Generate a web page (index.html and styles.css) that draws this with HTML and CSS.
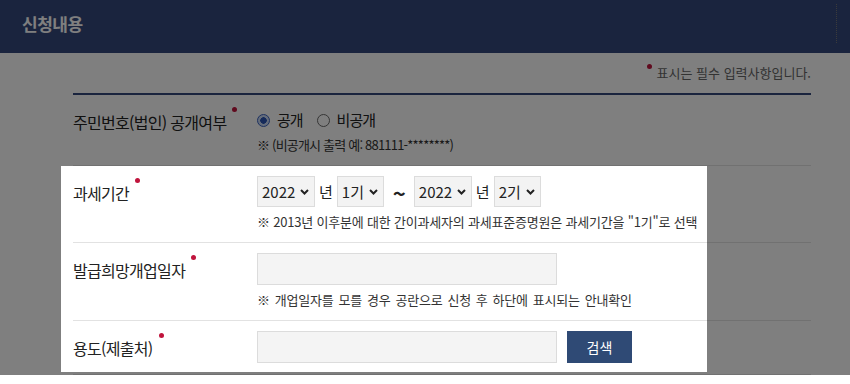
FILE: index.html
```html
<!DOCTYPE html>
<html lang="ko">
  <head>
    <meta charset="UTF-8" />
    <meta name="viewport" content="width=device-width, initial-scale=1.0" />
    <title>신청내용</title>
    <link rel="stylesheet" href="styles.css">
  </head>
  <body>
    <header class="page-head">
      <h1>신청내용</h1>
      <span class="head-edge"></span>
    </header>

    <main class="content">
      <p class="req-note"><i class="req"></i>표시는 필수 입력사항입니다.</p>

      <div class="form-table">
        <div class="row">
          <div class="label">주민번호(법인) 공개여부<i class="req"></i></div>
          <div class="field">
            <div class="radios">
              <label><input type="radio" name="open" checked />공개</label>
              <label><input type="radio" name="open" />비공개</label>
            </div>
            <p class="hint">※ (비공개시 출력 예: 881111-********)</p>
          </div>
        </div>

        <div class="focus-group">
          <div class="row">
            <div class="label">과세기간<i class="req"></i></div>
            <div class="field">
              <div class="period">
                <span class="sel">
                  <select name="fromYear">
                    <option>2022</option>
                    <option>2021</option>
                    <option>2020</option>
                  </select>
                  <svg width="9" height="6" viewBox="0 0 9 6"><path d="M1 1l3.5 3.5L8 1" fill="none" stroke="#222" stroke-width="2" /></svg>
                </span>
                <span>년</span>
                <span class="sel">
                  <select name="fromTerm">
                    <option>1기</option>
                    <option>2기</option>
                  </select>
                  <svg width="9" height="6" viewBox="0 0 9 6"><path d="M1 1l3.5 3.5L8 1" fill="none" stroke="#222" stroke-width="2" /></svg>
                </span>
                <span class="tilde">~</span>
                <span class="sel">
                  <select name="toYear">
                    <option>2022</option>
                    <option>2021</option>
                    <option>2020</option>
                  </select>
                  <svg width="9" height="6" viewBox="0 0 9 6"><path d="M1 1l3.5 3.5L8 1" fill="none" stroke="#222" stroke-width="2" /></svg>
                </span>
                <span>년</span>
                <span class="sel">
                  <select name="toTerm">
                    <option>2기</option>
                    <option>1기</option>
                  </select>
                  <svg width="9" height="6" viewBox="0 0 9 6"><path d="M1 1l3.5 3.5L8 1" fill="none" stroke="#222" stroke-width="2" /></svg>
                </span>
              </div>
              <p class="hint">※ 2013년 이후분에 대한 간이과세자의 과세표준증명원은 과세기간을 "1기"로 선택</p>
            </div>
          </div>

          <div class="row">
            <div class="label">발급희망개업일자<i class="req"></i></div>
            <div class="field">
              <input class="text-input" type="text" name="openDate" />
              <p class="hint wide">※ 개업일자를 모를 경우 공란으로 신청 후 하단에 표시되는 안내확인</p>
            </div>
          </div>

          <div class="row">
            <div class="label">용도(제출처)<i class="req"></i></div>
            <div class="field inline">
              <input class="text-input" type="text" name="usage" />
              <button type="button" class="btn-search">검색</button>
            </div>
          </div>

          <!-- dim everything except this block -->
          <div class="spotlight"></div>
        </div>
      </div>
    </main>
  </body>
</html>
```

FILE: styles.css
```css
* {
  box-sizing: border-box;
  font-family: "Noto Sans CJK KR", "Malgun Gothic", sans-serif;
}

html,
body {
  margin: 0;
  padding: 0;
  background: #fff;
  overflow: hidden;
}

.page-head {
  display: flex;
  align-items: center;
  height: 53px;
  padding: 0 13px 0 22px;
  background: #34497d;
}

.page-head h1 {
  margin: 0 0 7px;
  font-size: 17px;
  font-weight: bold;
  letter-spacing: -0.5px;
  color: #fff;
}

.head-edge {
  margin-left: auto;
  align-self: flex-start;
  margin-top: 4px;
  height: 39px;
  border-left: 1px dotted #777;
}

.content {
  padding: 0 39px 0 73px;
}

.req-note {
  margin: 10px 0 0;
  line-height: 20px;
  font-size: 13px;
  color: #666;
  text-align: right;
}

.req {
  display: inline-block;
  width: 5px;
  height: 5px;
  border-radius: 50%;
  background: #c0143c;
}

.req-note .req {
  margin-right: 5px;
  vertical-align: 9px;
}

.form-table {
  margin-top: 10px;
  border-top: 2px solid #34497d;
}

.focus-group {
  position: relative;
}

.row {
  display: grid;
  grid-template-columns: 184px 1fr;
  padding: 10px 0;
  border-bottom: 1px solid #e2e2e2;
}

.label {
  padding-top: 1px;
  line-height: 32px;
  font-size: 16px;
  letter-spacing: -0.7px;
  color: #222;
}

.label .req {
  margin-left: 6px;
  vertical-align: 17px;
}

.field.inline {
  display: flex;
  gap: 10px;
}

.radios {
  display: flex;
  gap: 14px;
  line-height: 30px;
  font-size: 15px;
  letter-spacing: -1px;
  color: #222;
}

.radios label {
  display: flex;
  align-items: center;
}

.radios input {
  appearance: none;
  width: 13px;
  height: 13px;
  margin: 0 7px 0 0;
  border: 1px solid #6b6b6b;
  border-radius: 50%;
  background: #fff;
}

.radios input:checked {
  border-color: #3a62c0;
  background: radial-gradient(circle, #2b55b5 0 3px, #c9d9f5 3.5px 100%);
}

.hint {
  margin: 5px 0 0;
  line-height: 20px;
  font-size: 13px;
  letter-spacing: -0.2px;
  color: #333;
}

.hint.wide {
  word-spacing: 1.5px;
}

.radios + .hint {
  margin-top: 0;
  letter-spacing: -0.8px;
}

.period {
  display: flex;
  align-items: center;
  gap: 4px;
  font-size: 15px;
  color: #222;
}

.sel {
  display: inline-flex;
  align-items: center;
  gap: 4px;
  height: 31px;
  padding: 0 5px 0 4px;
  border: 1px solid #dcdcdc;
  background: #f3f3f3;
}

.sel select {
  appearance: none;
  border: 0;
  padding: 0;
  background: transparent;
  font-size: 15px;
  color: #222;
}

.tilde {
  margin: 0 4px 0 5px;
  font-size: 22px;
  font-weight: bold;
  line-height: 1;
}

.text-input {
  width: 300px;
  height: 32px;
  border: 1px solid #dcdcdc;
  background: #f4f4f4;
  font-size: 14px;
}

.btn-search {
  width: 65px;
  height: 32px;
  border: 0;
  background: #2f4a75;
  color: #fff;
  font-size: 14px;
}

.spotlight {
  position: absolute;
  top: 0;
  left: -12px;
  width: 646px;
  height: 206px;
  box-shadow: 0 0 0 2000px rgba(0, 0, 0, 0.5);
  pointer-events: none;
  z-index: 10;
}
```
